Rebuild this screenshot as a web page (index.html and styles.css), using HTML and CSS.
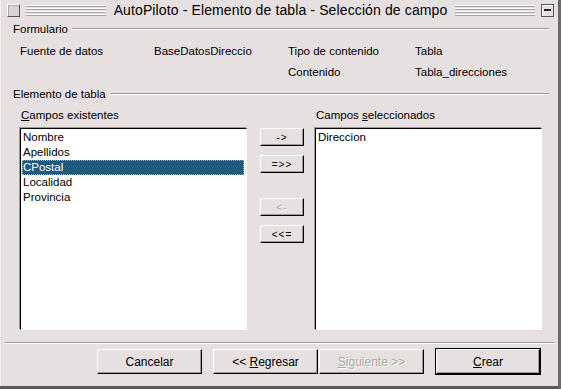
FILE: index.html
```html
<!DOCTYPE html>
<html lang="es">
<head>
<meta charset="UTF-8">
<title>AutoPiloto - Elemento de tabla - Selección de campo</title>
<link rel="stylesheet" href="styles.css">
</head>
<body>
<div class="window">
  <div class="titlebar">
    <div class="tb-box"></div>
    <div class="groove"></div>
    <div class="title">AutoPiloto - Elemento de tabla - Selección de campo</div>
    <div class="groove"></div>
    <div class="tb-box tb-min"><span></span></div>
  </div>

  <div class="content">
    <div class="legend"><span>Formulario</span><div class="rule"></div></div>

    <div class="info">
      <span>Fuente de datos</span>
      <span>BaseDatosDireccio</span>
      <span>Tipo de contenido</span>
      <span>Tabla</span>
      <span></span>
      <span></span>
      <span>Contenido</span>
      <span>Tabla_direcciones</span>
    </div>

    <div class="legend legend-2"><span>Elemento de tabla</span><div class="rule"></div></div>

    <div class="fields">
      <div class="col">
        <div class="col-label"><u>C</u>ampos existentes</div>
        <div class="list">
          <div class="item">Nombre</div>
          <div class="item">Apellidos</div>
          <div class="item selected">CPostal</div>
          <div class="item">Localidad</div>
          <div class="item">Provincia</div>
        </div>
      </div>

      <div class="movers">
        <div class="btn small">-&gt;</div>
        <div class="btn small">=&gt;&gt;</div>
        <div class="btn small disabled gap">&lt;-</div>
        <div class="btn small">&lt;&lt;=</div>
      </div>

      <div class="col">
        <div class="col-label">Campos <u>s</u>eleccionados</div>
        <div class="list">
          <div class="item">Direccion</div>
        </div>
      </div>
    </div>

    <div class="separator"></div>

    <div class="actions">
      <div class="btn wide btn-cancel">Cancelar</div>
      <div class="btn wide btn-back"><span>&lt;&lt; <u>R</u>egresar</span></div>
      <div class="btn wide disabled"><span><u>S</u>iguiente &gt;&gt;</span></div>
      <div class="btn wide default"><span><u>C</u>rear</span></div>
    </div>
  </div>
  <div class="bottom"></div>
</div>
</body>
</html>
```

FILE: styles.css
```css
* {
  margin: 0;
  padding: 0;
  box-sizing: border-box;
}

body {
  width: 561px;
  height: 389px;
  background: #e6e0e0;
  font-family: "Liberation Sans", Arial, sans-serif;
  font-size: 11.5px;
  color: #000;
  overflow: hidden;
}

.window {
  width: 561px;
  height: 389px;
  display: flex;
  flex-direction: column;
  border-right: 3px solid #6a6a6a;
  border-left: 1px solid #f4f0f0;
}

/* Title bar */
.titlebar {
  height: 20px;
  display: flex;
  align-items: center;
  padding: 0 4px 0 6px;
  gap: 6px;
}

.tb-box {
  width: 13px;
  height: 13px;
  border: 1px solid;
  border-color: #fff #555 #555 #fff;
  background: #d8d2d2;
  box-shadow: inset 1px 1px 0 #aaa;
}

.tb-min {
  display: flex;
  align-items: center;
  justify-content: center;
  background: #e6e0e0;
  border-color: #555;
  box-shadow: inset 1px 1px 0 #fff;
}

.tb-min span {
  width: 7px;
  height: 2px;
  background: #222;
}

.groove {
  flex: 1;
  height: 11px;
  background: repeating-linear-gradient(to bottom, #fff 0, #fff 1px, #a8a4a4 1px, #a8a4a4 2px, transparent 2px, transparent 3px);
}

.title {
  font-size: 14px;
  letter-spacing: 0.12px;
  color: #000;
  white-space: nowrap;
  padding: 0 2px;
}

/* Content */
.content {
  flex: 1;
  padding: 2px 5px 0 12px;
  display: flex;
  flex-direction: column;
}

.legend {
  height: 14px;
  display: flex;
  align-items: center;
  gap: 4px;
  padding-right: 4px;
}

.legend-2 {
  margin-top: 5px;
}

.rule {
  flex: 1;
  height: 2px;
  border-top: 1px solid #a09a9a;
  border-bottom: 1px solid #fff;
}

.info {
  margin-top: 4px;
  padding-left: 7px;
  display: grid;
  grid-template-columns: 134px 134px 127px 1fr;
  grid-auto-rows: 21px;
  align-items: center;
}

.fields {
  margin-top: 7px;
  display: flex;
  padding-left: 7px;
}

.col {
  width: 227px;
  flex-shrink: 0;
  display: flex;
  flex-direction: column;
}

.col-label {
  height: 14px;
  line-height: 14px;
  padding-left: 1px;
  margin-bottom: 6px;
}

.list {
  height: 202px;
  background: #fff;
  border: 1px solid;
  border-color: #000 #fff #fff #000;
  box-shadow: -1px -1px 0 #9c9898;
  padding: 1px 2px 0 1px;
}

.item {
  height: 15px;
  line-height: 15px;
  padding-left: 1px;
}

.selected {
  background: #1f5a7e;
  color: #fff;
  outline: 1px dotted #8fb4cc;
  outline-offset: -1px;
}

.movers {
  width: 68px;
  flex-shrink: 0;
  padding: 20px 11px 0 13px;
  display: flex;
  flex-direction: column;
  gap: 9px;
}

.movers .gap {
  margin-top: 16px;
}

.btn {
  display: flex;
  align-items: center;
  justify-content: center;
  border: 1px solid;
  border-color: #fff #000 #000 #fff;
  box-shadow: inset -1px -1px 0 #a09a9a;
  background: #e6e0e0;
  white-space: nowrap;
}

.btn.small {
  height: 18px;
  font-size: 10px;
  letter-spacing: 1px;
}

.btn.disabled {
  color: #aca6a6;
  text-shadow: 1px 1px 0 #fff;
}

.separator {
  margin: 12px -1px 0 -8px;
  height: 2px;
  border-top: 1px solid #a09a9a;
  border-bottom: 1px solid #fff;
}

.actions {
  margin-top: 5px;
  padding-left: 84px;
  display: flex;
}

.btn.wide {
  width: 105px;
  height: 25px;
  font-size: 12px;
}

.btn-cancel {
  margin-right: 11px;
}

.btn-back {
  margin-right: 1px;
}

.btn.default {
  width: 104px;
  margin-left: 12px;
  outline: 1px solid #000;
}

.bottom {
  height: 3px;
  background: #5a5a5a;
  margin-left: -1px;
}
```
